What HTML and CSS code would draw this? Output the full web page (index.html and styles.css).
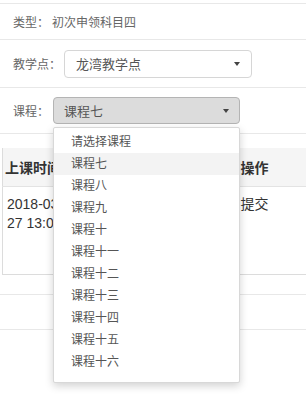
FILE: index.html
```html
<!DOCTYPE html>
<html lang="zh-CN">
<head>
    <meta charset="UTF-8">
    <meta name="viewport" content="width=device-width, initial-scale=1.0">
    <title>课程预约</title>
    <link rel="stylesheet" href="styles.css">
</head>
<body>
    <!-- Booking form -->
    <div class="form">
        <div class="row row-type">
            <span class="label">类型：</span>
            <span class="value">初次申领科目四</span>
        </div>
        <div class="row row-site">
            <span class="label">教学点：</span>
            <div class="select site-select">
                <span>龙湾教学点</span>
                <i class="caret"></i>
            </div>
        </div>
        <div class="row row-course">
            <span class="label">课程：</span>
            <div class="select-wrap">
                <div class="select course-select active">
                    <span>课程七</span>
                    <i class="caret"></i>
                </div>
                <ul class="dropdown">
                    <li>请选择课程</li>
                    <li class="hover">课程七</li>
                    <li>课程八</li>
                    <li>课程九</li>
                    <li>课程十</li>
                    <li>课程十一</li>
                    <li>课程十二</li>
                    <li>课程十三</li>
                    <li>课程十四</li>
                    <li>课程十五</li>
                    <li>课程十六</li>
                </ul>
            </div>
        </div>
    </div>

    <!-- Lesson table -->
    <table class="lessons">
        <thead>
            <tr>
                <th class="col-time">上课时间</th>
                <th class="col-coach">教练</th>
                <th class="col-op">操作</th>
            </tr>
        </thead>
        <tbody>
            <tr>
                <td class="col-time">2018-03-27 13:00</td>
                <td class="col-coach">王教练</td>
                <td class="col-op">提交</td>
            </tr>
        </tbody>
    </table>

    <div class="footer-rule"></div>
    <div class="footer-rule second"></div>
</body>
</html>
```

FILE: styles.css
```css
* {
    margin: 0;
    padding: 0;
    box-sizing: border-box;
}

body {
    width: 306px;
    height: 400px;
    overflow: hidden;
    background: #fff;
    color: #555;
    font-family: "Liberation Sans", "Noto Sans CJK SC", sans-serif;
    font-size: 12px;
}

/* Form rows */
.form {
    border-top: 1px solid #e8e8e8;
    margin-top: 3px;
}

.row {
    display: flex;
    align-items: center;
    padding-left: 13px;
    border-bottom: 1px solid #e8e8e8;
}

.row-type {
    height: 36px;
}

.row-site {
    height: 48px;
}

.row-course {
    height: 46px;
}

.label {
    color: #666;
    font-size: 12px;
    margin-right: 3px;
}

.value {
    color: #666;
    font-size: 12px;
}

.select {
    display: flex;
    align-items: center;
    justify-content: space-between;
    height: 28px;
    border: 1px solid #d6d6d6;
    border-radius: 4px;
    background: #fff;
    color: #555;
    font-size: 13px;
    padding: 0 11px;
}

.site-select {
    width: 188px;
}

.select-wrap {
    position: relative;
    margin-left: 1px;
}

.course-select {
    width: 187px;
    height: 27px;
    padding-left: 10px;
    padding-right: 10px;
}

.course-select.active {
    background: #dcdcdc;
    border-color: #b4b4b4;
}

.caret {
    width: 0;
    height: 0;
    border-left: 3px solid transparent;
    border-right: 3px solid transparent;
    border-top: 4px solid #444;
}

/* Open dropdown over the table */
.dropdown {
    position: absolute;
    top: 30px;
    left: 0;
    width: 187px;
    list-style: none;
    background: #fff;
    border: 1px solid #d8d8d8;
    border-radius: 2px;
    box-shadow: 0 3px 8px rgba(0, 0, 0, 0.18);
    padding: 3px 0 9px;
    z-index: 10;
}

.dropdown li {
    height: 22px;
    line-height: 22px;
    padding-left: 17px;
    font-size: 12px;
    color: #555;
}

.dropdown li.hover {
    background: #f3f3f3;
}

/* Lesson table */
.lessons {
    margin: 14px 0 0 2px;
    width: 304px;
    border-collapse: collapse;
    table-layout: fixed;
    border-left: 1px solid #dcdcdc;
}

.lessons th {
    height: 38px;
    background: #f5f5f5;
    color: #333;
    font-size: 14px;
    font-weight: bold;
    text-align: left;
    white-space: nowrap;
    overflow: hidden;
    padding: 0 2px;
    border-bottom: 1px solid #e3e3e3;
}

.lessons td {
    height: 88px;
    vertical-align: top;
    padding: 8px 4px;
    color: #333;
    font-size: 14px;
    line-height: 19px;
    border-bottom: 1px solid #dcdcdc;
}

.col-time {
    width: 80px;
}

.col-coach {
    width: 157px;
}

.lessons td.col-op,
.lessons th.col-op {
    padding-left: 1px;
}

.footer-rule {
    height: 20px;
    border-bottom: 1px solid #e8e8e8;
}

.footer-rule.second {
    height: 35px;
}
```
